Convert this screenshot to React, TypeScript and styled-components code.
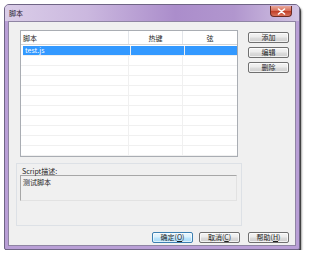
import * as React from "react";
import styled, { createGlobalStyle } from "styled-components";

const GlobalStyle = createGlobalStyle`
  html, body {
    margin: 0;
    padding: 0;
    background: #ffffff;
  }
  body {
    font-family: "Noto Sans CJK SC", "Liberation Sans", sans-serif;
    font-size: 7px;
    color: #1e1e1e;
  }
`;

const Window = styled.div`
  margin: 4px 0 0 4px;
  width: 296px;
  height: 246px;
  box-sizing: border-box;
  border: 1px solid #6f6585;
  border-radius: 5px 5px 2px 2px;
  background: #b99fd6;
  box-shadow: 1px 2px 0 rgba(30, 30, 30, 0.75), 2px 3px 2px rgba(0, 0, 0, 0.35);
  display: flex;
  flex-direction: column;
  overflow: hidden;
`;

const TitleBar = styled.div`
  height: 16px;
  display: flex;
  align-items: flex-start;
  padding-left: 4px;
  background: linear-gradient(
    to right,
    #dacde8 0%,
    #cbb8df 28%,
    #ab8dcb 58%,
    #b196ce 78%,
    #d2c4e3 100%
  );
`;

const Title = styled.span`
  margin-top: 4px;
  font-size: 7px;
  line-height: 8px;
  color: #2a2233;
`;

const CloseButton = styled.div`
  margin-left: auto;
  margin-right: 7px;
  margin-top: 1px;
  width: 22px;
  height: 11px;
  box-sizing: border-box;
  border: 1px solid #6b2b23;
  border-top: none;
  border-radius: 0 0 4px 4px;
  background: linear-gradient(to bottom, #e9a99b 0%, #d8705c 45%, #c2412a 55%, #d9725c 100%);
  display: flex;
  align-items: center;
  justify-content: center;
`;

const Client = styled.div`
  margin: 0 3px 3px 3px;
  flex: 1;
  box-sizing: border-box;
  border: 1px solid #8f85a3;
  background: #f0f0f0;
  padding: 8px 6px 2px 7px;
  display: flex;
  flex-direction: column;
`;

const Main = styled.div`
  display: flex;
  gap: 6px;
`;

const LeftColumn = styled.div`
  width: 226px;
  display: flex;
  flex-direction: column;
`;

const SideButtons = styled.div`
  width: 41px;
  padding-top: 2px;
  display: flex;
  flex-direction: column;
  gap: 4px;
`;

const ListBox = styled.div`
  margin: 0 4px;
  height: 127px;
  box-sizing: border-box;
  border: 1px solid #a9adb3;
  background: #ffffff;
  overflow: hidden;
`;

const Row = styled.div<{ $header?: boolean; $selected?: boolean }>`
  display: grid;
  grid-template-columns: 108px 54px 1fr;
  height: ${(p) => (p.$header ? "13px" : "9px")};
  border-bottom: 1px solid ${(p) => (p.$header ? "#d5d5d5" : "#f0f0f0")};
  margin-left: ${(p) => (p.$selected ? "2px" : "0")};
  background: ${(p) => (p.$selected ? "#3399ff" : "transparent")};
  color: ${(p) => (p.$selected ? "#ffffff" : "#1e1e1e")};
  margin-bottom: ${(p) => (p.$header ? "1px" : "0")};
`;

const Cell = styled.div<{ $center?: boolean; $header?: boolean }>`
  border-right: 1px solid ${(p) => (p.$header ? "#e3e6ea" : "#f0f0f0")};
  padding-left: ${(p) => (p.$center ? "0" : "2px")};
  text-align: ${(p) => (p.$center ? "center" : "left")};
  line-height: ${(p) => (p.$header ? "14px" : "9px")};
  white-space: nowrap;
  overflow: hidden;
  &:last-child {
    border-right: none;
  }
`;

const Group = styled.div`
  margin-top: 6px;
  height: 63px;
  box-sizing: border-box;
  border: 1px solid #dde1e6;
  padding: 3px 4px 0 3px;
`;

const Label = styled.div`
  line-height: 8px;
  padding-left: 2px;
  height: 8px;
`;

const Description = styled.div`
  margin-top: 0;
  height: 26px;
  box-sizing: border-box;
  border: 1px solid #a7a7a7;
  border-right-color: #e2e2e2;
  border-bottom-color: #e2e2e2;
  padding: 2px 0 0 2px;
  line-height: 8px;
  background: #f0f0f0;
`;

const BottomBar = styled.div`
  margin-top: 6px;
  display: flex;
  justify-content: flex-end;
  gap: 6px;
`;

const Button = styled.div<{ $primary?: boolean }>`
  width: 41px;
  height: 11px;
  box-sizing: border-box;
  border: 1px solid ${(p) => (p.$primary ? "#3c7fb1" : "#707070")};
  border-radius: 2px;
  background: ${(p) =>
    p.$primary
      ? "linear-gradient(to bottom, #eaf6fd 0%, #d9f0fc 48%, #bee6fd 52%, #a7d9f5 100%)"
      : "linear-gradient(to bottom, #f4f4f4 0%, #ebebeb 48%, #dddddd 52%, #cfcfcf 100%)"};
  box-shadow: inset 0 0 0 1px ${(p) => (p.$primary ? "rgba(255,255,255,0.6)" : "rgba(255,255,255,0.7)")};
  display: flex;
  align-items: center;
  justify-content: center;
  font-size: 7px;
  line-height: 9px;
  color: #1e1e1e;
  white-space: nowrap;
`;

const LastButton = styled(Button)`
  margin-left: 2px;
`;

const Accel = styled.span`
  text-decoration: underline;
`;

const scripts = [{ name: "test.js", hotkey: "", chord: "" }];

export default function App() {
  const blanks = Array.from({ length: 10 });
  return (
    <>
      <GlobalStyle />
      <Window>
        <TitleBar>
          <Title>脚本</Title>
          <CloseButton>
            <svg width="9" height="7" viewBox="0 0 9 7">
              <path d="M1.5 1 L7.5 6 M7.5 1 L1.5 6" stroke="#ffffff" strokeWidth="1.6" strokeLinecap="round" />
            </svg>
          </CloseButton>
        </TitleBar>
        <Client>
          <Main>
            <LeftColumn>
              <ListBox>
                <Row $header>
                  <Cell $header>脚本</Cell>
                  <Cell $header $center>热键</Cell>
                  <Cell $header $center>弦</Cell>
                </Row>
                {scripts.map((s) => (
                  <Row key={s.name} $selected>
                    <Cell>{s.name}</Cell>
                    <Cell>{s.hotkey}</Cell>
                    <Cell>{s.chord}</Cell>
                  </Row>
                ))}
                {blanks.map((_, i) => (
                  <Row key={i}>
                    <Cell />
                    <Cell />
                    <Cell />
                  </Row>
                ))}
              </ListBox>
              <Group>
                <Label>Script描述:</Label>
                <Description>测试脚本</Description>
              </Group>
            </LeftColumn>
            <SideButtons>
              <Button>添加</Button>
              <Button>编辑</Button>
              <Button>删除</Button>
            </SideButtons>
          </Main>
          <BottomBar>
            <Button $primary>
              确定(<Accel>O</Accel>)
            </Button>
            <Button>
              取消(<Accel>C</Accel>)
            </Button>
            <LastButton>
              帮助(<Accel>H</Accel>)
            </LastButton>
          </BottomBar>
        </Client>
      </Window>
    </>
  );
}
